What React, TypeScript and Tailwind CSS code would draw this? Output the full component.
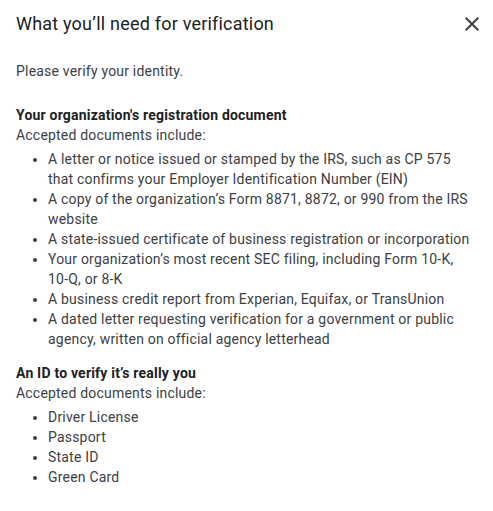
import React from "react";

const orgDocs = [
  "A letter or notice issued or stamped by the IRS, such as CP 575 that confirms your Employer Identification Number (EIN)",
  "A copy of the organization’s Form 8871, 8872, or 990 from the IRS website",
  "A state-issued certificate of business registration or incorporation",
  "Your organization’s most recent SEC filing, including Form 10-K, 10-Q, or 8-K",
  "A business credit report from Experian, Equifax, or TransUnion",
  "A dated letter requesting verification for a government or public agency, written on official agency letterhead",
];

const idDocs = ["Driver License", "Passport", "State ID", "Green Card"];

function Bullets({ items }: { items: string[] }) {
  return (
    <ul className="mt-1">
      {items.map((t) => (
        <li key={t} className="flex pl-[17px]">
          <span className="mt-[9px] h-[4px] w-[4px] shrink-0 rounded-full bg-[#3c4043]" />
          <span className="ml-[11px]">{t}</span>
        </li>
      ))}
    </ul>
  );
}

export default function App() {
  return (
    <div
      className="w-[493px] h-[511px] bg-white text-[#3c4043] tracking-[0.2px]"
      style={{ fontFamily: "Roboto, 'Noto Sans', sans-serif" }}
    >
      <div className="flex items-center justify-between pl-4 pr-[9px] pt-3">
        <h1 className="text-[18px] leading-6 text-[#202124] font-normal">
          What you’ll need for verification
        </h1>
        <svg width="24" height="24" viewBox="0 0 24 24" fill="#3c4043">
          <path d="M19 6.41L17.59 5 12 10.59 6.41 5 5 6.41 10.59 12 5 17.59 6.41 19 12 13.41 17.59 19 19 17.59 13.41 12z" />
        </svg>
      </div>
      <div className="pl-4 pr-[23px] pt-[25px] text-[14px] leading-5">
        <p>Please verify your identity.</p>
        <div className="mt-6">
          <h2 className="font-bold text-[#202124]">Your organization's registration document</h2>
          <p>Accepted documents include:</p>
          <Bullets items={orgDocs} />
        </div>
        <div className="mt-[14px]">
          <h2 className="font-bold text-[#202124]">An ID to verify it’s really you</h2>
          <p>Accepted documents include:</p>
          <Bullets items={idDocs} />
        </div>
      </div>
    </div>
  );
}
